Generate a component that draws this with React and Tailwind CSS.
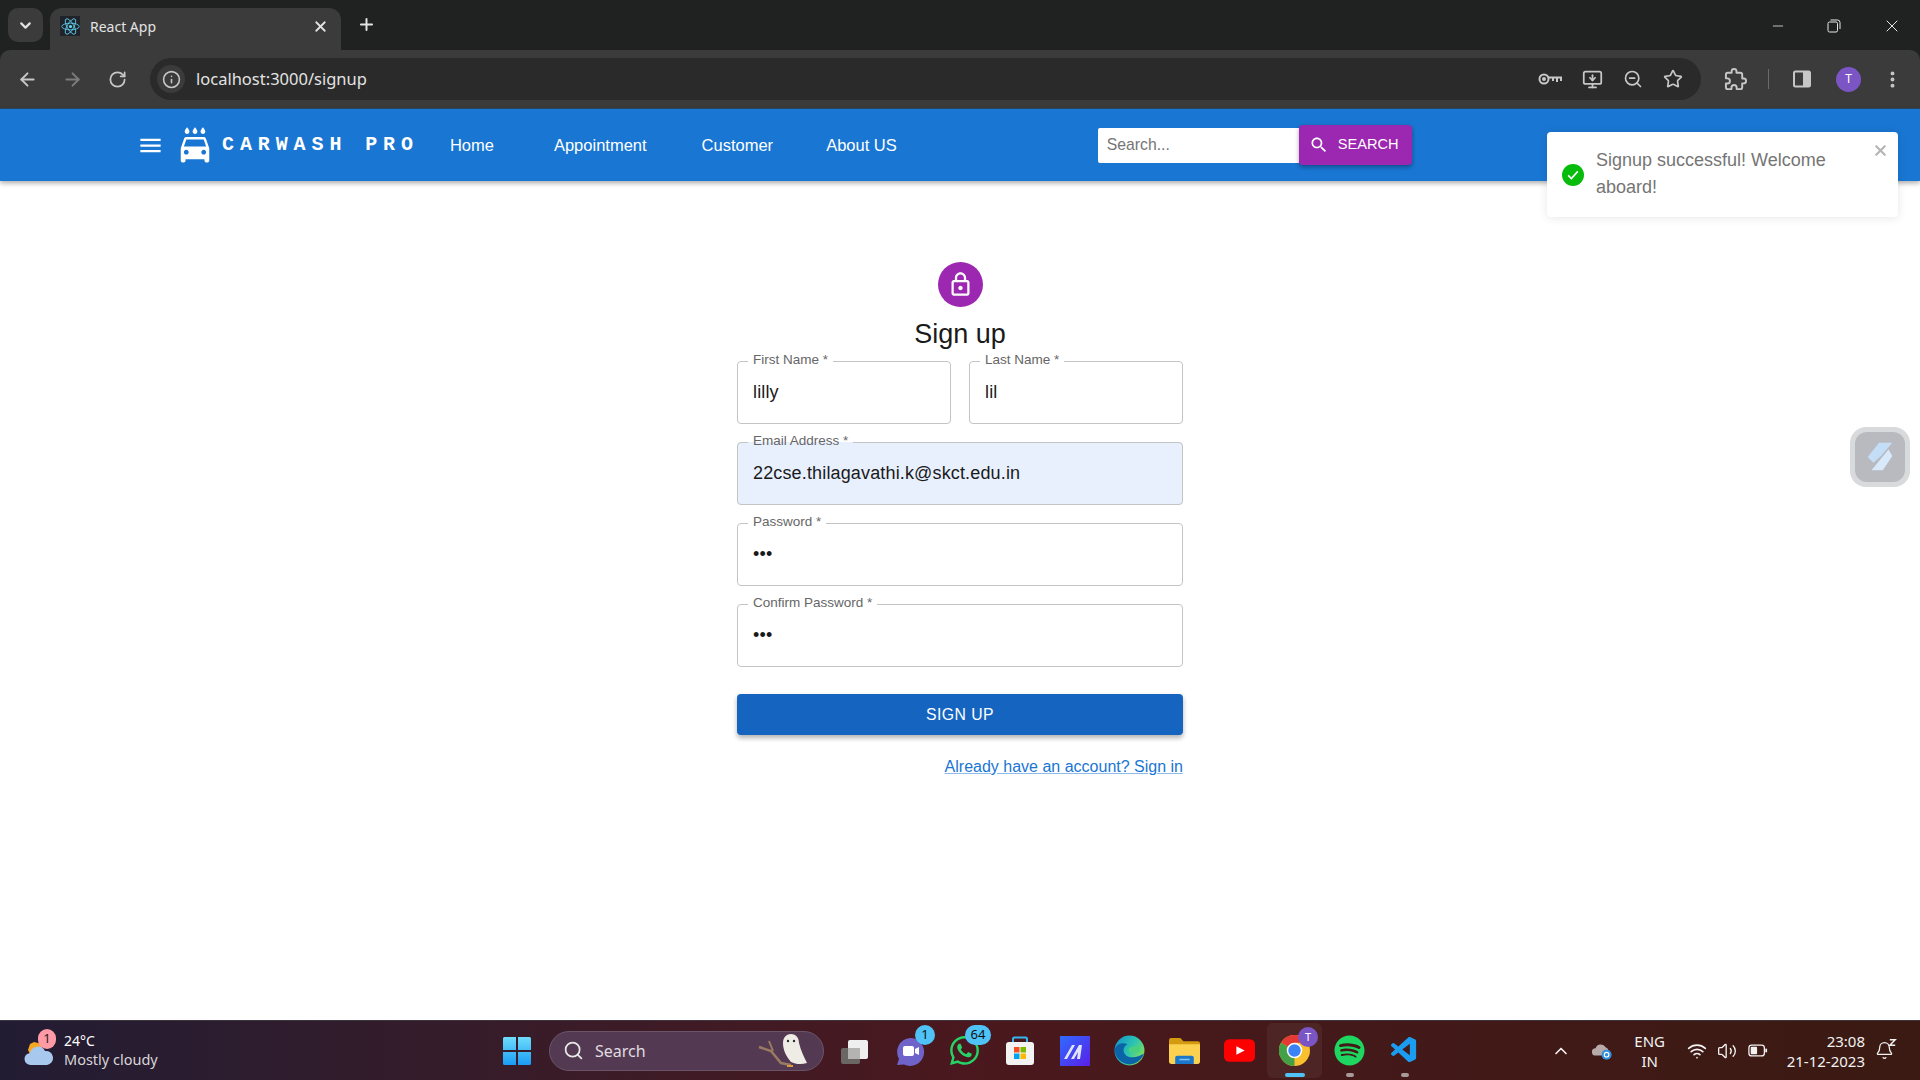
import React from 'react';
import { ArrowLeft, ArrowRight, RotateCw, Info, X, Plus, ChevronDown, ChevronUp, Minus, MonitorDown, ZoomOut, Star, MoreVertical, Search as SearchLine, Wifi, Volume2, Bell } from 'lucide-react';
import { FaWhatsapp, FaSpotify } from 'react-icons/fa';
import { VscVscode } from 'react-icons/vsc';

const SANS = "font-['Liberation_Sans',Arial,sans-serif]";

// MUI icon paths
const MenuIcon = () => (
  <svg viewBox="0 0 24 24" className="w-[27px] h-[27px] fill-white">
    <path d="M3 18h18v-2H3v2zm0-5h18v-2H3v2zm0-7v2h18V6H3z" />
  </svg>
);

const CarWashIcon = () => (
  <svg viewBox="0 0 24 24" className="w-[38px] h-[38px] fill-white">
    <path d="M17 5c.83 0 1.5-.67 1.5-1.5 0-1-1.5-2.7-1.5-2.7s-1.5 1.7-1.5 2.7c0 .83.67 1.5 1.5 1.5zm-5 0c.83 0 1.5-.67 1.5-1.5 0-1-1.5-2.7-1.5-2.7s-1.5 1.7-1.5 2.7c0 .83.67 1.5 1.5 1.5zM7 5c.83 0 1.5-.67 1.5-1.5C8.5 2.5 7 .8 7 .8S5.5 2.5 5.5 3.5C5.5 4.33 6.17 5 7 5zm11.92 3.01C18.72 7.42 18.16 7 17.5 7h-11c-.66 0-1.21.42-1.42 1.01L3 14v8c0 .55.45 1 1 1h1c.55 0 1-.45 1-1v-1h12v1c0 .55.45 1 1 1h1c.55 0 1-.45 1-1v-8l-2.08-5.99zM6.5 18c-.83 0-1.5-.67-1.5-1.5S5.67 15 6.5 15s1.5.67 1.5 1.5S7.33 18 6.5 18zm11 0c-.83 0-1.5-.67-1.5-1.5s.67-1.5 1.5-1.5 1.5.67 1.5 1.5-.67 1.5-1.5 1.5zM5 13l1.5-4.5h11L19 13H5z" />
  </svg>
);

const SearchIcon = () => (
  <svg viewBox="0 0 24 24" className="w-[20px] h-[20px] fill-white">
    <path d="M15.5 14h-.79l-.28-.27C15.41 12.59 16 11.11 16 9.5 16 5.91 13.09 3 9.5 3S3 5.91 3 9.5 5.91 16 9.5 16c1.61 0 3.09-.59 4.23-1.57l.27.28v.79l5 4.99L20.49 19l-4.99-5zm-6 0C7.01 14 5 11.99 5 9.5S7.01 5 9.5 5 14 7.01 14 9.5 11.99 14 9.5 14z" />
  </svg>
);

const LockIcon = () => (
  <svg viewBox="0 0 24 24" className="w-[27px] h-[27px] fill-white">
    <path d="M18 8h-1V6c0-2.76-2.24-5-5-5S7 3.24 7 6v2H6c-1.1 0-2 .9-2 2v10c0 1.1.9 2 2 2h12c1.1 0 2-.9 2-2V10c0-1.1-.9-2-2-2zM9 6c0-1.66 1.34-3 3-3s3 1.34 3 3v2H9V6zm9 14H6V10h12v10zm-6-3c1.1 0 2-.9 2-2s-.9-2-2-2-2 .9-2 2 .9 2 2 2z" />
  </svg>
);

const ReactLogo = () => (
  <span className="w-[20px] h-[20px] bg-[#20232a] flex items-center justify-center">
    <svg viewBox="-12 -12 24 24" className="w-[19px] h-[19px] fill-none stroke-[#61dafb]" strokeWidth="1">
      <circle r="2" fill="#61dafb" stroke="none" />
      <ellipse rx="11" ry="4.2" />
      <ellipse rx="11" ry="4.2" transform="rotate(60)" />
      <ellipse rx="11" ry="4.2" transform="rotate(120)" />
    </svg>
  </span>
);

const RestoreIcon = () => (
  <svg viewBox="0 0 14 14" className="w-[14px] h-[14px] fill-none stroke-[#e8e8e8]" strokeWidth="1">
    <rect x="1" y="3" width="9.5" height="10" rx="1.5" />
    <path d="M3.5 1h7A2.5 2.5 0 0 1 13 3.5V10" />
  </svg>
);

const KeyIcon = () => (
  <svg viewBox="0 0 24 14" className="w-[24px] h-[14px] fill-none stroke-[#c7c7c7]" strokeWidth="2">
    <circle cx="6" cy="7" r="4.500" />
    <circle cx="6" cy="7" r="1" fill="#c7c7c7" />
    <path d="M10.500 5.500H23V9M19 6v4M15 6v3" />
  </svg>
);

const ExtensionIcon = () => (
  <svg viewBox="0 0 24 24" className="w-[23px] h-[23px] fill-none stroke-[#c7c7c7]" strokeWidth="2" strokeLinejoin="round">
    <path d="M20.5 11H19V7c0-1.1-.9-2-2-2h-4V3.5C13 2.12 11.88 1 10.5 1S8 2.12 8 3.5V5H4c-1.1 0-1.99.9-1.99 2v3.8H3.500c1.490 0 2.700 1.210 2.700 2.700s-1.210 2.700-2.700 2.700H2V20c0 1.100.9 2 2 2h3.800v-1.500c0-1.490 1.210-2.700 2.700-2.700 1.490 0 2.700 1.210 2.700 2.700V22H17c1.100 0 2-.9 2-2v-4h1.500c1.380 0 2.500-1.120 2.500-2.500S21.880 11 20.500 11z" />
  </svg>
);

const SidePanelIcon = () => (
  <svg viewBox="0 0 20 20" className="w-[20px] h-[20px]">
    <rect x="2" y="2.5" width="16" height="15" rx="1.5" fill="none" stroke="#c7c7c7" strokeWidth="2" />
    <rect x="11" y="3" width="6.5" height="14" fill="#c7c7c7" />
  </svg>
);

const WeatherIcon = () => (
  <svg viewBox="0 0 34 34" className="w-[34px] h-[34px]">
    <path d="M6 16 L8 10 L12 8 L20 10 L20 20 L8 20Z" fill="#f5a623" />
    <path d="M9 31a6 6 0 0 1-1-12 8 8 0 0 1 15-2 7 7 0 0 1 2 14Z" fill="#a9c8ee" />
  </svg>
);

const WindowsLogo = () => (
  <svg viewBox="0 0 30 30" className="w-[30px] h-[30px]">
    <defs>
      <linearGradient id="winGrad" x1="0" y1="0" x2="0" y2="1">
        <stop offset="0" stopColor="#6fdcfb" />
        <stop offset="1" stopColor="#1a9cf5" />
      </linearGradient>
    </defs>
    <path d="M1 2.5A1.5 1.5 0 0 1 2.5 1H14v13H1zM16 1h11.5A1.5 1.5 0 0 1 29 2.5V14H16zM1 16h13v13H2.500A1.5 1.5 0 0 1 1 27.500zM16 16h13v11.500a1.500 1.500 0 0 1-1.500 1.500H16z" fill="url(#winGrad)" />
  </svg>
);

const OwlArt = () => (
  <svg viewBox="0 0 60 36" className="w-[60px] h-[36px]">
    <path d="M2 14 L14 18 L24 30 L34 32" fill="none" stroke="#9a7b62" strokeWidth="2.500" />
    <path d="M12 8 L16 18" fill="none" stroke="#9a7b62" strokeWidth="2" />
    <path d="M26 10c0-6 4-9 8-9s8 3 8 9c2 8 5 14 8 20-6 2-12 1-16-1-5-6-8-12-8-19z" fill="#efece6" />
    <circle cx="31" cy="8" r="1.200" fill="#2a2a2a" />
    <circle cx="37" cy="8" r="1.200" fill="#2a2a2a" />
    <path d="M30 33h6" stroke="#d99a3b" strokeWidth="2" />
  </svg>
);

const TaskView = () => (
  <svg viewBox="0 0 30 30" className="w-[30px] h-[30px]">
    <rect x="1" y="12" width="19" height="16" rx="2" fill="#6a6664" />
    <rect x="8" y="4" width="20" height="19" rx="2" fill="#efefef" />
    <rect x="8" y="12" width="12" height="11" fill="#b5b3b1" />
  </svg>
);

const TeamsIcon = () => (
  <svg viewBox="0 0 30 30" className="w-[30px] h-[30px]">
    <path d="M15 2a14 14 0 1 1-6 26.600L2 29l2-6A14 14 0 0 1 15 2z" fill="#6f63c9" />
    <rect x="8" y="10" width="11" height="10" rx="2" fill="#fff" />
    <path d="M20 13l4-2v8l-4-2z" fill="#fff" />
  </svg>
);

const StoreIcon = () => (
  <svg viewBox="0 0 30 30" className="w-[30px] h-[30px]">
    <rect x="1" y="6" width="28" height="23" rx="3" fill="#f3f3f3" />
    <path d="M8 6V3a1.500 1.500 0 0 1 1.500-1.500h11A1.500 1.500 0 0 1 22 3v3" fill="none" stroke="#36b4f0" strokeWidth="2" />
    <rect x="9" y="11" width="5.500" height="5.500" fill="#f25022" />
    <rect x="15.500" y="11" width="5.500" height="5.500" fill="#7fba00" />
    <rect x="9" y="17.500" width="5.500" height="5.500" fill="#00a4ef" />
    <rect x="15.500" y="17.500" width="5.500" height="5.500" fill="#ffb900" />
  </svg>
);

const MaIcon = () => (
  <svg viewBox="0 0 30 30" className="w-[30px] h-[30px]">
    <defs>
      <linearGradient id="maGrad" x1="0" y1="0" x2="1" y2="1">
        <stop offset="0" stopColor="#2f6bff" />
        <stop offset="1" stopColor="#5a1fe8" />
      </linearGradient>
    </defs>
    <rect width="30" height="30" fill="url(#maGrad)" />
    <path d="M4 23l8-14h3l-8 14zM11 23l8-14h3l-2 14h-3l1-7-4 7zM22 9" fill="#dfe6ff" />
  </svg>
);

const EdgeIcon = () => (
  <svg viewBox="0 0 30 30" className="w-[31px] h-[31px]">
    <defs>
      <linearGradient id="edgeGrad" x1="0" y1="0" x2="1" y2="0.600">
        <stop offset="0" stopColor="#0f8fd0" />
        <stop offset="0.600" stopColor="#2dc5b0" />
        <stop offset="1" stopColor="#7fdc5a" />
      </linearGradient>
    </defs>
    <circle cx="15" cy="15" r="14.500" fill="url(#edgeGrad)" />
    <path d="M29 18c-2 7-10 12-17 10C5 26 0 20 1 13c2-5 8-6 12-4-4 2-5 7-2 10 4 4 12 3 18-1z" fill="#0c64a8" />
    <path d="M14 14c1-3 7-4 10-2 2 2 1 5-2 5h-5c-2 0-3-1-3-3z" fill="#48d07e" />
  </svg>
);

const FilesIcon = () => (
  <svg viewBox="0 0 30 30" className="w-[31px] h-[31px]">
    <path d="M0 5a2 2 0 0 1 2-2h9l3 3h14a2 2 0 0 1 2 2v4H0z" fill="#d49a10" />
    <path d="M0 9h30v17a2 2 0 0 1-2 2H2a2 2 0 0 1-2-2z" fill="#fbd14f" />
    <path d="M6 28v-6a2 2 0 0 1 2-2h14a2 2 0 0 1 2 2v6z" fill="#1a77c9" />
    <rect x="10" y="23" width="10" height="1.500" fill="#7dc4f5" />
  </svg>
);

const YoutubeIcon = () => (
  <svg viewBox="0 0 30 22" className="w-[31px] h-[23px]">
    <rect width="30" height="22" rx="5" fill="#ff0000" />
    <path d="M12 7l8 4-8 4z" fill="#fff" />
  </svg>
);

const ChromeIcon = () => (
  <svg viewBox="0 0 30 30" className="w-[31px] h-[31px]">
    <circle cx="15" cy="15" r="15" fill="#fbc02d" />
    <path d="M15 15L2 7.500A15 15 0 0 1 28 7.500H15z" fill="#e53935" />
    <path d="M15 15L2 7.500A15 15 0 0 0 15 30z" fill="#43a047" />
    <circle cx="15" cy="15" r="7.500" fill="#fff" />
    <circle cx="15" cy="15" r="6" fill="#3b82f6" />
  </svg>
);

const SnoozeBell = () => (
  <span className="relative ml-[10px] w-[20px] h-[20px]">
    <Bell size={19} strokeWidth={1.6} />
    <svg viewBox="0 0 10 10" className="absolute -right-[2px] -top-[3px] w-[9px] h-[9px] fill-none stroke-[#f2f2f2]" strokeWidth="1.600">
      <path d="M2 2h6L2 8h6" />
    </svg>
  </span>
);

const Badge = ({ children, className }) => (
  <span className={`absolute flex items-center justify-center rounded-full text-[#111] text-[13px] ${className}`}>
    {children}
  </span>
);

const TaskItem = ({ children, dot, active, badge }) => (
  <div className={`relative w-[55px] h-[55px] flex items-center justify-center rounded-md ${active ? 'bg-white/5' : ''}`}>
    {children}
    {badge}
    {dot && <span className={`absolute bottom-[1px] left-1/2 -translate-x-1/2 h-[4px] rounded-full ${active ? 'w-[20px] bg-[#4fc3f7]' : 'w-[8px] bg-[#a89a98]'}`} />}
  </div>
);

const Field = ({ label, value, type = 'text', filled }) => (
  <fieldset className={`w-full h-[70px] border border-[#c4c4c4] rounded-[4px] pl-[10px] ${filled ? 'bg-[#e8f0fe] border-[#aab4c8]' : ''}`}>
    <legend className="px-[5px] h-[14px] leading-[14px] text-[13.5px] text-[#666666]">
      <span className="relative -top-[1px]">{label} *</span>
    </legend>
    <input
      type={type}
      value={value}
      readOnly
      className={`block w-full h-[49px] pl-[5px] bg-transparent outline-none text-[18px] tracking-[0.150px] text-[#1a1a1a] ${SANS}`}
    />
  </fieldset>
);

const BrowserChrome = () => (
  <header className="shrink-0 bg-[#202221] font-['Noto_Sans',sans-serif]">
    <div className="h-[50px] flex items-start pt-[8px] pl-[8px]">
      <button className="w-[35px] h-[34px] rounded-[10px] bg-[#3b3b3b] flex items-center justify-center text-[#e3e3e3]">
        <ChevronDown size={17} strokeWidth={3} />
      </button>
      <div className="ml-[7px] w-[291px] h-[42px] rounded-t-[12px] bg-[#3b3b3b] flex items-center pl-[10px] pr-[12px] pb-[6px]">
        <ReactLogo />
        <span className="ml-[10px] text-[14px] text-[#e3e3e3]">React App</span>
        <X size={17} strokeWidth={2.5} className="ml-auto text-[#e3e3e3]" />
      </div>
      <Plus size={19} strokeWidth={2.5} className="ml-[16px] mt-[7px] text-[#e3e3e3]" />
      <div className="ml-auto flex items-center text-[#e8e8e8] mt-[8px] mr-[18px]">
        <Minus size={16} strokeWidth={1.2} />
        <span className="ml-[41px]"><RestoreIcon /></span>
        <X size={20} strokeWidth={1.2} className="ml-[41px]" />
      </div>
    </div>
    <div className="h-[59px] rounded-t-[10px] bg-[#3b3b3b] border-b border-[#2a4a6a] flex items-center pl-[17px] pr-[17px] text-[#c7c7c7]">
      <ArrowLeft size={21} strokeWidth={2.2} />
      <ArrowRight size={21} strokeWidth={2.2} className="ml-[24px] text-[#7d7d7d]" />
      <RotateCw size={19} strokeWidth={2.2} className="ml-[25px]" />
      <div className="ml-[23px] flex-1 h-[42px] rounded-full bg-[#2a2a2a] flex items-center pl-[7px] pr-[18px]">
        <span className="w-[28px] h-[28px] rounded-full bg-[#3b3b3b] flex items-center justify-center">
          <Info size={19} strokeWidth={2} />
        </span>
        <span className="ml-[11px] text-[16.500px] text-[#e3e3e3]">localhost:3000/signup</span>
        <div className="ml-auto flex items-center gap-[20px]">
          <KeyIcon />
          <MonitorDown size={21} strokeWidth={2} />
          <ZoomOut size={20} strokeWidth={2} />
          <Star size={20} strokeWidth={2} />
        </div>
      </div>
      <span className="ml-[23px]"><ExtensionIcon /></span>
      <span className="ml-[21px] w-[1px] h-[20px] bg-[#6a6a6a]" />
      <span className="ml-[23px]"><SidePanelIcon /></span>
      <span className="ml-[24px] w-[25px] h-[25px] rounded-full bg-[#7c55c4] flex items-center justify-center text-[12px] text-white">T</span>
      <MoreVertical size={21} strokeWidth={2.5} className="ml-[21px]" />
    </div>
  </header>
);

const NavBar = () => (
  <nav className={`relative z-10 shrink-0 h-[72px] bg-[#1976d2] flex items-center pl-[137px] text-white shadow-[0_2px_5px_rgba(0,0,0,0.35)] ${SANS}`}>
    <MenuIcon />
    <span className="ml-[12px]"><CarWashIcon /></span>
    <span className="ml-[8px] font-['Liberation_Mono',monospace] font-bold text-[20px] tracking-[5.900px] whitespace-pre">CARWASH PRO</span>
    <a className="ml-[31px] text-[16.500px]">Home</a>
    <a className="ml-[60px] text-[16.500px]">Appointment</a>
    <a className="ml-[55px] text-[16.500px]">Customer</a>
    <a className="ml-[53px] text-[16.500px]">About US</a>
    <div className="ml-[201px] flex items-center">
      <input
        placeholder="Search..."
        readOnly
        className="w-[201px] h-[35px] bg-white pl-[9px] outline-none rounded-l-[2px] text-[15.750px] text-[#333] placeholder:text-[#757575]"
      />
      <button className="w-[113px] h-[40px] rounded-[4px] bg-[#9c27b0] shadow-[0_2px_4px_rgba(0,0,0,0.35)] flex items-center pl-[10px] text-[14.600px]">
        <SearchIcon />
        <span className="ml-[9px]">SEARCH</span>
      </button>
    </div>
  </nav>
);

const SignupForm = () => (
  <main className={`flex-1 bg-white flex flex-col items-center pt-[81px] ${SANS}`}>
    <div className="w-[45px] h-[45px] rounded-full bg-[#9c27b0] flex items-center justify-center">
      <LockIcon />
    </div>
    <h1 className="mt-[9px] text-[27px] leading-[36px] text-[#1a1a1a]">Sign up</h1>
    <form className="mt-[2px] w-[446px] flex flex-col gap-[11px]">
      <div className="grid grid-cols-2 gap-[18px]">
        <Field label="First Name" value="lilly" />
        <Field label="Last Name" value="lil" />
      </div>
      <Field label="Email Address" value="22cse.thilagavathi.k@skct.edu.in" filled />
      <Field label="Password" value="abc" type="password" />
      <Field label="Confirm Password" value="abc" type="password" />
      <button type="button" className="mt-[16px] h-[41px] rounded-[4px] bg-[#1565c0] text-white text-[15.750px] tracking-[0.450px] shadow-[0_3px_5px_rgba(0,0,0,0.3)]">
        SIGN UP
      </button>
      <div className="mt-[9px] flex justify-end">
        <a className="text-[16px] leading-[23px] text-[#1976d2] underline decoration-[#8ebbe9]">Already have an account? Sign in</a>
      </div>
    </form>
  </main>
);

const Toast = () => (
  <div className={`absolute left-[1547px] top-[132px] z-20 w-[351px] h-[85px] bg-white rounded-[4px] shadow-[0_1px_10px_rgba(0,0,0,0.1)] flex items-center pl-[15px] pr-[40px] ${SANS}`}>
    <span className="shrink-0 w-[22px] h-[22px] rounded-full bg-[#07bc0c] flex items-center justify-center">
      <svg viewBox="0 0 20 20" className="w-[16px] h-[16px] fill-none stroke-white" strokeWidth="2"><path d="M4 10.500l4 4 8-9" /></svg>
    </span>
    <p className="ml-[12px] -mt-[2px] text-[18px] leading-[27px] text-[#757575]">Signup successful! Welcome aboard!</p>
    <X size={17} strokeWidth={3} className="absolute right-[9px] top-[10px] text-[#b5b5b5]" />
  </div>
);

const FloatWidget = () => (
  <div className="absolute left-[1850px] top-[427px] z-20 w-[60px] h-[60px] rounded-[16px] bg-[#d9dadc] p-[5px]">
    <div className="w-full h-full rounded-[12px] bg-[#b9babf] flex items-center justify-center">
      <svg viewBox="0 0 30 36" className="w-[30px] h-[34px]">
        <path d="M2 18 L14 3 L28 3 L16 17 L8 24 Z" fill="#c4def8" />
        <path d="M28 17 L24 10 L6 32 L18 32 Z" fill="#d8e9fb" />
      </svg>
    </div>
  </div>
);

const TaskBar = () => (
  <footer className="relative shrink-0 h-[60px] border-t border-[#3c3540] bg-gradient-to-r from-[#221c33] via-[#4a181e] to-[#3a1a12] flex items-center pl-[22px] pr-[25px] text-white font-['Noto_Sans',sans-serif]">
    <div className="relative flex items-center w-[400px]">
      <WeatherIcon />
      <span className="absolute left-[16px] -top-[4px] w-[18px] h-[20px] rounded-full bg-[#ff9aa6] text-[#222] text-[13px] flex items-center justify-center">1</span>
      <div className="ml-[8px] -mt-[2px] leading-[19px]">
        <div className="text-[14px]">24°C</div>
        <div className="text-[14.500px] text-[#d8d5d8]">Mostly cloudy</div>
      </div>
    </div>
    <div className="ml-[80px]"><WindowsLogo /></div>
    <div className="relative ml-[17px] w-[275px] h-[40px] rounded-full bg-[#533a52] border border-[#6b5468] flex items-center pl-[13px]">
      <SearchLine size={21} strokeWidth={2} className="text-[#e8e8e8]" />
      <span className="ml-[11px] text-[16px] text-[#e0dce0]">Search</span>
      <span className="absolute right-[6px] top-[1px]"><OwlArt /></span>
    </div>
    <div className="ml-[3px] flex items-center">
      <TaskItem><TaskView /></TaskItem>
      <TaskItem badge={<Badge className="right-[2px] top-[2px] w-[20px] h-[20px] bg-[#4fc3f7]">1</Badge>}><TeamsIcon /></TaskItem>
      <TaskItem badge={<Badge className="right-[1px] top-[2px] w-[26px] h-[20px] bg-[#4fc3f7]">64</Badge>}><FaWhatsapp size={33} className="text-[#25d366]" /></TaskItem>
      <TaskItem><StoreIcon /></TaskItem>
      <TaskItem><MaIcon /></TaskItem>
      <TaskItem><EdgeIcon /></TaskItem>
      <TaskItem><FilesIcon /></TaskItem>
      <TaskItem><YoutubeIcon /></TaskItem>
      <TaskItem active dot badge={<span className="absolute right-[4px] top-[4px] w-[20px] h-[20px] rounded-full bg-[#7c55c4] text-[11px] text-white flex items-center justify-center">T</span>}><ChromeIcon /></TaskItem>
      <TaskItem dot><FaSpotify size={31} className="text-[#1ed760]" /></TaskItem>
      <TaskItem dot><VscVscode size={31} className="text-[#1a9cf0]" /></TaskItem>
    </div>
    <div className="ml-auto flex items-center text-[#f2f2f2]">
      <ChevronUp size={20} strokeWidth={2} />
      <svg viewBox="0 0 24 20" className="ml-[20px] w-[22px] h-[20px]">
        <path d="M5 15a4 4 0 0 1 0-8 6 6 0 0 1 11-1 5 5 0 0 1 1 9z" fill="#b7aaa8" />
        <circle cx="17" cy="14" r="5.500" fill="#2f8fe0" />
        <circle cx="17" cy="14" r="2.500" fill="none" stroke="#fff" strokeWidth="1.200" />
      </svg>
      <div className="ml-[16px] w-[42px] text-center text-[15px] leading-[20px]">ENG<br />IN</div>
      <Wifi size={20} strokeWidth={2} className="ml-[16px]" />
      <Volume2 size={20} strokeWidth={1.6} className="ml-[10px]" />
      <svg viewBox="0 0 22 14" className="ml-[11px] w-[20px] h-[13px]">
        <rect x="1" y="1" width="17" height="12" rx="3" fill="none" stroke="#f2f2f2" strokeWidth="1.400" />
        <rect x="3" y="3" width="7" height="8" rx="1" fill="#f2f2f2" />
        <rect x="19" y="5" width="2" height="4" fill="#f2f2f2" />
      </svg>
      <div className="ml-[19px] text-right text-[15px] leading-[20px]">
        <div>23:08</div>
        <div>21-12-2023</div>
      </div>
      <SnoozeBell />
    </div>
  </footer>
);

export default function App() {
  return (
    <div className="relative w-[1920px] h-[1080px] overflow-hidden flex flex-col">
      <BrowserChrome />
      <NavBar />
      <SignupForm />
      <TaskBar />
      <Toast />
      <FloatWidget />
    </div>
  );
}
